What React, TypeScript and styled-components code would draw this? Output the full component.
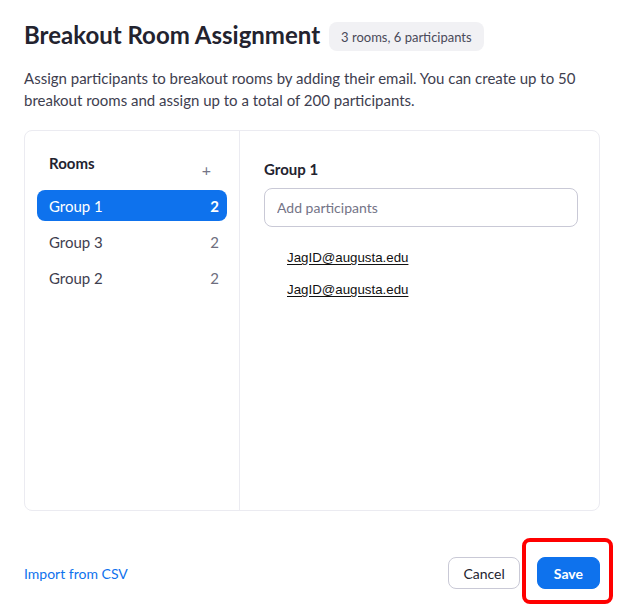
import React from "react";
import styled, { createGlobalStyle } from "styled-components";

const Global = createGlobalStyle`
  html, body { margin: 0; padding: 0; background: #ffffff; }
  body { font-family: Lato, "Open Sans", sans-serif; color: #23232f; }
  * { box-sizing: border-box; }
`;

const Page = styled.div`
  width: 626px;
  height: 610px;
  padding: 18px 26px 0 24px;
  display: flex;
  flex-direction: column;
`;

const Header = styled.div`
  display: flex;
  align-items: center;
  gap: 9px;
`;

const Title = styled.h1`
  margin: 0;
  font-size: 24px;
  font-weight: 700;
  line-height: 32px;
  color: #23232f;
`;

const Badge = styled.span`
  display: inline-flex;
  align-items: center;
  height: 29px;
  padding: 0 12px;
  margin-top: 4px;
  border-radius: 8px;
  background: #f1f1f4;
  font-size: 13px;
  color: #4a4a59;
`;

const Description = styled.p`
  margin: 16px 0 0;
  font-size: 15px;
  line-height: 22px;
  color: #3e3e4f;
`;

const Panel = styled.div`
  margin-top: 19px;
  height: 381px;
  border: 1px solid #ebebf1;
  border-radius: 8px;
  display: grid;
  grid-template-columns: 215px 1fr;
`;

const Sidebar = styled.div`
  border-right: 1px solid #ebebf1;
  padding: 22px 12px 0 12px;
`;

const SidebarHead = styled.div`
  display: flex;
  justify-content: space-between;
  align-items: flex-start;
  padding: 0 16px 0 12px;
  height: 37px;
`;

const SidebarTitle = styled.span`
  font-size: 15px;
  font-weight: 700;
  color: #23232f;
  line-height: 20px;
`;

const AddButton = styled.span`
  font-size: 16px;
  color: #747487;
  line-height: 16px;
  margin-top: 9px;
`;

const RoomList = styled.div`
  display: flex;
  flex-direction: column;
  gap: 5px;
`;

const Room = styled.div<{ $active?: boolean }>`
  display: flex;
  justify-content: space-between;
  align-items: center;
  height: 31px;
  padding: 0 8px 0 12px;
  border-radius: 8px;
  font-size: 15px;
  background: ${(p) => (p.$active ? "#0e72ed" : "transparent")};
  color: ${(p) => (p.$active ? "#ffffff" : "#3e3e4f")};
`;

const Count = styled.span<{ $active?: boolean }>`
  font-weight: ${(p) => (p.$active ? 700 : 400)};
  color: ${(p) => (p.$active ? "#ffffff" : "#6e6e7e")};
`;

const Content = styled.div`
  padding: 28px 21px 0 24px;
`;

const GroupTitle = styled.div`
  font-size: 15px;
  font-weight: 700;
  line-height: 20px;
  color: #23232f;
`;

const Input = styled.input`
  display: block;
  width: 100%;
  height: 39px;
  margin-top: 9px;
  padding: 0 12px;
  border: 1px solid #c9c9d6;
  border-radius: 8px;
  font-family: Lato, sans-serif;
  font-size: 14px;
  color: #23232f;
  outline: none;
  &::placeholder { color: #747487; }
`;

const EmailList = styled.ul`
  list-style: none;
  margin: 22px 0 0;
  padding: 0 0 0 23px;
  display: flex;
  flex-direction: column;
  gap: 14px;
`;

const Email = styled.li`
  font-family: "Liberation Sans", Arial, sans-serif;
  font-size: 13.3px;
  line-height: 18px;
  color: #111111;
  text-decoration: underline;
  text-underline-offset: 2px;
`;

const Footer = styled.div`
  margin-top: 46px;
  display: flex;
  justify-content: space-between;
  align-items: center;
`;

const Link = styled.a`
  font-size: 14px;
  color: #0e72ed;
  text-decoration: none;
  cursor: pointer;
`;

const Actions = styled.div`
  display: flex;
  align-items: center;
  gap: 17px;
`;

const Button = styled.button<{ $primary?: boolean }>`
  height: 32px;
  padding: 0 ${(p) => (p.$primary ? 16 : 14)}px;
  border-radius: 8px;
  font-family: Lato, sans-serif;
  font-size: 14px;
  font-weight: ${(p) => (p.$primary ? 700 : 400)};
  border: 1px solid ${(p) => (p.$primary ? "#0e72ed" : "#c9c9d6")};
  background: ${(p) => (p.$primary ? "#0e72ed" : "#ffffff")};
  color: ${(p) => (p.$primary ? "#ffffff" : "#23232f")};
  cursor: pointer;
`;

const Highlight = styled.div`
  position: relative;
  &::after {
    content: "";
    position: absolute;
    left: -15px;
    right: -13px;
    top: -19px;
    bottom: -15px;
    border: 4px solid #ff0000;
    border-radius: 8px;
    pointer-events: none;
  }
`;

const rooms = [
  { name: "Group 1", count: 2, active: true },
  { name: "Group 3", count: 2 },
  { name: "Group 2", count: 2 },
];

export default function App() {
  return (
    <>
      <Global />
      <Page>
        <Header>
          <Title>Breakout Room Assignment</Title>
          <Badge>3 rooms, 6 participants</Badge>
        </Header>
        <Description>
          Assign participants to breakout rooms by adding their email. You can create up to 50
          breakout rooms and assign up to a total of 200 participants.
        </Description>
        <Panel>
          <Sidebar>
            <SidebarHead>
              <SidebarTitle>Rooms</SidebarTitle>
              <AddButton>+</AddButton>
            </SidebarHead>
            <RoomList>
              {rooms.map((r) => (
                <Room key={r.name} $active={r.active}>
                  <span>{r.name}</span>
                  <Count $active={r.active}>{r.count}</Count>
                </Room>
              ))}
            </RoomList>
          </Sidebar>
          <Content>
            <GroupTitle>Group 1</GroupTitle>
            <Input placeholder="Add participants" />
            <EmailList>
              <Email>JagID@augusta.edu</Email>
              <Email>JagID@augusta.edu</Email>
            </EmailList>
          </Content>
        </Panel>
        <Footer>
          <Link>Import from CSV</Link>
          <Actions>
            <Button>Cancel</Button>
            <Highlight>
              <Button $primary>Save</Button>
            </Highlight>
          </Actions>
        </Footer>
      </Page>
    </>
  );
}
